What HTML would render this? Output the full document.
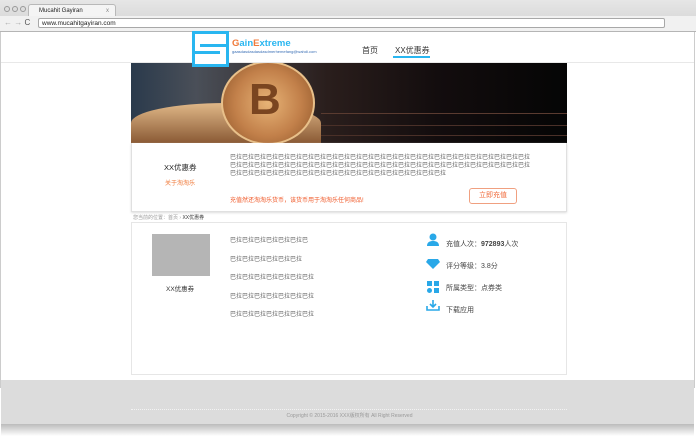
<!DOCTYPE html><html><head><meta charset="utf-8"><style>
*{margin:0;padding:0;box-sizing:border-box}
body{width:699px;height:436px;background:#fff;font-family:"Liberation Sans","Noto Sans CJK SC",sans-serif;position:relative;overflow:hidden}
.a{position:absolute}
.cj{font-family:"Liberation Sans","Noto Sans CJK SC",sans-serif}
</style></head><body>
<!-- chrome -->
<div class="a" style="left:0;top:0;width:696px;height:32px;background:linear-gradient(#e6e6e6,#d2d2d2);border-bottom:1px solid #b5b5b5"></div>
<div class="a" style="left:4px;top:6px;width:6px;height:6px;border-radius:50%;border:1px solid #999;background:#ddd"></div>
<div class="a" style="left:12px;top:6px;width:6px;height:6px;border-radius:50%;border:1px solid #999;background:#ddd"></div>
<div class="a" style="left:20px;top:6px;width:6px;height:6px;border-radius:50%;border:1px solid #999;background:#ddd"></div>
<div class="a" style="left:28px;top:4px;width:88px;height:13px;background:#f4f4f4;border:1px solid #b8b8b8;border-bottom:none;border-radius:3px 3px 0 0;font-size:6px;padding:3px 0 0 10px;color:#222">Mucahit Gayiran<span style="position:absolute;right:6px;color:#888">x</span></div>
<div class="a" style="left:0;top:16px;width:696px;height:15px;background:#f1f1f1"></div>
<div class="a" style="left:4px;top:18px;font-size:8px;color:#aaa">← → <span style="color:#555">C</span></div>
<div class="a" style="left:38px;top:18px;width:627px;height:10px;background:#fff;border:1px solid #a8a8a8;border-radius:2px;font-size:6.5px;padding:1px 0 0 3px;color:#222">www.mucahitgayiran.com</div>
<div class="a" style="left:0;top:32px;width:1px;height:356px;background:#ccc"></div>
<div class="a" style="left:694px;top:32px;width:1px;height:356px;background:#ccc"></div>
<!-- header -->
<div class="a" style="left:1px;top:62px;width:693px;height:1px;background:#e8e8e8"></div>
<div class="a" style="left:232px;top:38px;font-size:9.5px;font-weight:bold;color:#29b6f0"><span style="color:#f07a3a">G</span>ain<span style="color:#f07a3a">E</span>xtreme</div>
<div class="a" style="left:232px;top:49px;font-size:4px;color:#3a6fb5">gaasdasdasdasdasdmerhemefang@wahdi.com</div>
<div class="a cj" style="left:362px;top:45px;font-size:8px;color:#333">首页</div>
<div class="a cj" style="left:395px;top:45px;font-size:8px;color:#333">XX优惠券</div>
<div class="a" style="left:393px;top:56px;width:37px;height:2px;background:#29b6f0"></div>
<!-- banner -->
<div class="a" style="left:131px;top:63px;width:436px;height:80px;background:linear-gradient(90deg,#2a3a4c 0%,#4a4f58 15%,#2a1e1c 45%,#130d0e 70%,#050505 100%);overflow:hidden">
 <div class="a" style="left:0;top:40px;width:190px;height:40px;background:linear-gradient(#e0b888,#8a5a35);border-radius:50% 50% 0 0/50% 50% 0 0"></div>
 <div class="a" style="left:190px;top:50px;width:246px;height:1px;background:#5a3b30"></div>
 <div class="a" style="left:190px;top:62px;width:246px;height:1px;background:#4a3028"></div>
 <div class="a" style="left:190px;top:72px;width:246px;height:1px;background:#4a3028"></div>
 <div class="a" style="left:90px;top:-2px;width:94px;height:84px;border-radius:50%;background:radial-gradient(circle,#e7b376 0%,#c2804a 55%,#8c5428 100%);border:2px solid #e8c08a"></div>
 <div class="a" style="left:118px;top:12px;font-size:44px;font-weight:bold;color:#7a4520;line-height:50px">B</div>
</div>
<!-- logo -->
<div class="a" style="left:192px;top:31px;width:37px;height:36px;border:3px solid #29b6f0;background:#fff"></div>
<div class="a" style="left:200px;top:44px;width:29px;height:3px;background:#29b6f0"></div>
<div class="a" style="left:192px;top:51px;width:28px;height:3px;background:#29b6f0"></div>
<!-- info card -->
<div class="a" style="left:131px;top:143px;width:436px;height:69px;border:1px solid #e0e0e0;border-top:none;box-shadow:0 1px 2px #ddd"></div>
<div class="a cj" style="left:164px;top:162px;font-size:7.5px;color:#222">XX优惠券</div>
<div class="a cj" style="left:165px;top:178px;font-size:6px;color:#f07a3a">关于淘淘乐</div>
<div class="a cj" style="left:230px;top:154px;width:302px;font-size:6px;line-height:8.2px;color:#666;word-break:break-all">巴拉巴拉巴拉巴拉巴拉巴拉巴拉巴拉巴拉巴拉巴拉巴拉巴拉巴拉巴拉巴拉巴拉巴拉巴拉巴拉巴拉巴拉巴拉巴拉巴拉巴拉巴拉巴拉巴拉巴拉巴拉巴拉巴拉巴拉巴拉巴拉巴拉巴拉巴拉巴拉巴拉巴拉巴拉巴拉巴拉巴拉巴拉巴拉巴拉巴拉巴拉巴拉巴拉巴拉巴拉巴拉巴拉巴拉巴拉巴拉巴拉巴拉巴拉巴拉巴拉巴拉巴拉巴拉</div>
<div class="a cj" style="left:230px;top:195px;font-size:6px;color:#f05a2a">充值然还淘淘乐货币，该货币用于淘淘乐任何商品!</div>
<div class="a cj" style="left:469px;top:188px;width:48px;height:16px;border:1px solid #f0a080;border-radius:3px;font-size:7px;color:#f06a3a;text-align:center;line-height:14px">立即充值</div>
<div class="a cj" style="left:133px;top:214px;font-size:5px;color:#999">您当前的位置：首页 › <span style="color:#333">XX优惠券</span></div>
<!-- content card -->
<div class="a" style="left:131px;top:222px;width:436px;height:153px;border:1px solid #e6e6e6"></div>
<div class="a" style="left:152px;top:234px;width:58px;height:42px;background:#b5b5b5"></div>
<div class="a cj" style="left:166px;top:283px;font-size:6.5px;color:#333">XX优惠券</div>
<div class="a cj" style="left:230px;top:232px;font-size:6px;line-height:18.5px;color:#666">巴拉巴拉巴拉巴拉巴拉巴拉巴<br>巴拉巴拉巴拉巴拉巴拉巴拉<br>巴拉巴拉巴拉巴拉巴拉巴拉巴拉<br>巴拉巴拉巴拉巴拉巴拉巴拉巴拉<br>巴拉巴拉巴拉巴拉巴拉巴拉巴拉</div>
<svg class="a" style="left:426px;top:233px" width="14" height="80" viewBox="0 0 14 80" fill="#29a8e8">
<circle cx="7" cy="4" r="3.5"/><path d="M1 13c0-4 3-5 6-5s6 1 6 5z"/>
<path d="M2 26h10l2 3-7 7-7-7z"/>
<rect x="1" y="48" width="5" height="5"/><rect x="8" y="48" width="5" height="5"/><circle cx="3.5" cy="57.5" r="2.5"/><rect x="8" y="55" width="5" height="5"/>
<path d="M7 67v7M4 71l3 3 3-3" stroke="#29a8e8" stroke-width="1.6" fill="none"/><path d="M1 73v4h12v-4" stroke="#29a8e8" stroke-width="1.6" fill="none"/>
</svg>
<div class="a cj" style="left:446px;top:234px;font-size:7px;line-height:22px;color:#444">充值人次：<b>972893</b>人次<br>评分等级：3.8分<br>所属类型：点券类<br>下载应用</div>
<!-- footer -->
<div class="a" style="left:1px;top:380px;width:693px;height:44px;background:#dcdcdc"></div>
<div class="a" style="left:131px;top:409px;width:436px;height:1px;border-top:1px dotted #f3f3f3"></div>
<div class="a" style="left:0;top:412px;width:699px;text-align:center;font-size:5px;color:#999">Copyright © 2015-2016 XXX版权所有 All Right Reserved</div>
<div class="a" style="left:1px;top:424px;width:693px;height:12px;background:linear-gradient(#bbb,#fff)"></div>
</body></html>
